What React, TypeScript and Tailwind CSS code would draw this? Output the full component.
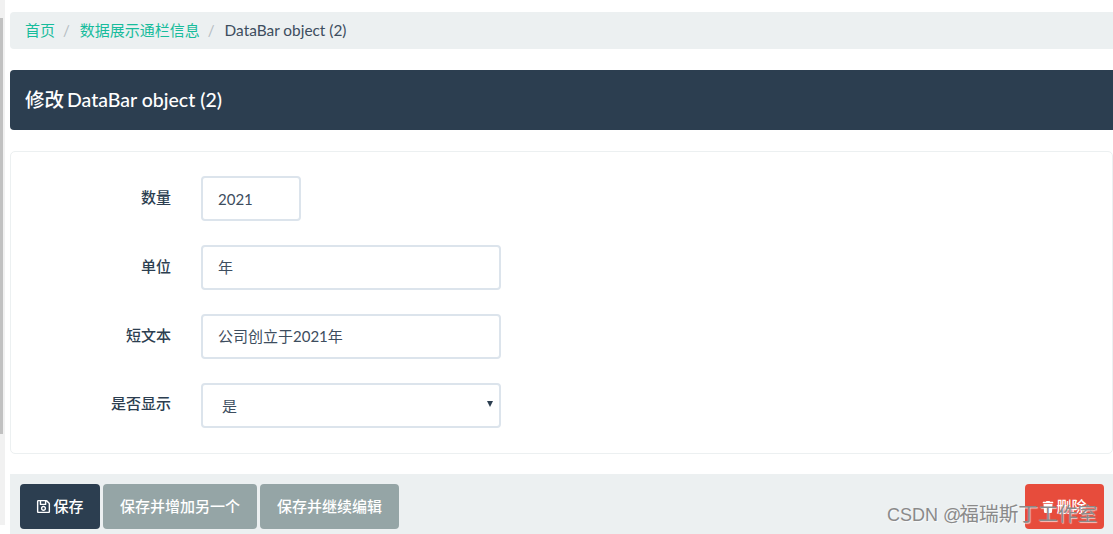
import { FaRegSave, FaTrash } from "react-icons/fa"

const font = "font-['Lato','Noto_Sans_CJK_SC',sans-serif]"

function Field({ label, lift = false, children }: { label: string; lift?: boolean; children: React.ReactNode }) {
  return (
    <div className="flex h-[45px] items-center">
      <label className={`w-[160px] text-right text-[15px] font-medium text-[#2c3e50] ${lift ? "pb-[4px]" : "pb-[2px]"}`}>
        {label}
      </label>
      <div className="ml-[30px] flex">{children}</div>
    </div>
  )
}

function TextInput({ value, wide = true }: { value: string; wide?: boolean }) {
  return (
    <div
      className={`flex h-[45px] items-center rounded-[4px] border-2 border-[#dce4ec] bg-white pl-[15px] text-[15px] text-[#3d4d5e] ${wide ? "w-[300px]" : "w-[100px] pt-[2px]"}`}
    >
      {value}
    </div>
  )
}

export default function App() {
  return (
    <div className={`relative h-[534px] w-[1113px] overflow-hidden bg-white ${font}`}>
      {/* left edge of the page behind */}
      <div className="absolute left-0 top-0 h-[525px] w-[5px] bg-[#f1f1f1]">
        <div className="mt-[18px] h-[416px] w-[3px] bg-[#c1c1c1]" />
      </div>

      <div className="flex flex-col pl-[10px] pt-[12px]">
        <nav className="flex h-[37px] items-center rounded-l-[4px] bg-[#ecf0f1] pl-[15px] text-[15px] text-[#3d4d5e]">
          <a className="text-[#18bc9c]">首页</a>
          <span className="pl-[8px] pr-[10px] text-[#b4bcc2]">/</span>
          <a className="text-[#18bc9c]">数据展示通栏信息</a>
          <span className="pl-[8px] pr-[10px] text-[#b4bcc2]">/</span>
          <span className="text-[15.4px]">DataBar object (2)</span>
        </nav>

        <div className="mt-[21px] flex h-[60px] items-center gap-[3px] rounded-l-[4px] bg-[#2c3e50] pl-[15px] text-[19.5px] font-medium text-white">
          <span>修改</span>
          <span>DataBar object (2)</span>
        </div>

        <form className="mt-[21px] flex h-[303px] flex-col gap-[24px] rounded-[5px] border border-[#ecf0f1] pt-[24px]">
          <Field label="数量">
            <TextInput value="2021" wide={false} />
          </Field>
          <Field label="单位">
            <TextInput value="年" />
          </Field>
          <Field label="短文本">
            <TextInput value="公司创立于2021年" />
          </Field>
          <Field label="是否显示" lift>
            <div className="relative">
              <TextInput value="" />
              <span className="absolute left-[21px] top-[12px] text-[15px] text-[#3d4d5e]">是</span>
              <span className="absolute right-[8px] top-[18px] h-0 w-0 border-x-[3px] border-t-[6px] border-x-transparent border-t-[#2c3e50]" />
            </div>
          </Field>
        </form>

        <div className="mt-[20px] flex h-[60px] items-start gap-[3px] bg-[#ecf0f1] pl-[10px] pt-[10px] text-[15px] font-medium text-white">
          <button className="flex h-[45px] w-[80px] items-center justify-center gap-[2px] rounded-[4px] bg-[#2c3e50]">
            <FaRegSave size={15} />
            保存
          </button>
          <button className="h-[45px] w-[154px] rounded-[4px] bg-[#95a5a6]">保存并增加另一个</button>
          <button className="h-[45px] w-[139px] rounded-[4px] bg-[#95a5a6]">保存并继续编辑</button>
          <button className="ml-auto mr-[9px] flex h-[45px] w-[79px] items-center justify-center gap-[2px] rounded-[4px] bg-[#e74c3c]">
            <FaTrash size={12} />
            删除
          </button>
        </div>
      </div>

      {/* watermark */}
      <div className="absolute left-[887px] top-[501px] flex items-baseline font-['Liberation_Sans','Noto_Sans_CJK_SC',sans-serif] leading-[26px] text-[#8a8a8a] [text-shadow:1px_1px_1px_rgba(255,255,255,0.7)]">
        <span className="text-[18px]">CSDN @</span>
        <span className="-ml-[2px] text-[19.7px]">福瑞斯丁工作室</span>
      </div>
    </div>
  )
}
